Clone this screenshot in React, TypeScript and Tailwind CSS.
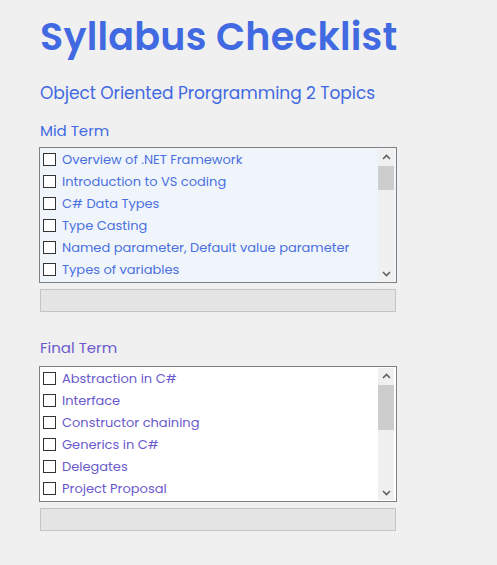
import React from "react";

const mid = [
  "Overview of .NET Framework",
  "Introduction to VS coding",
  "C# Data Types",
  "Type Casting",
  "Named parameter, Default value parameter",
  "Types of variables",
];
const fin = [
  "Abstraction in C#",
  "Interface",
  "Constructor chaining",
  "Generics in C#",
  "Delegates",
  "Project Proposal",
];

function Scrollbar({ thumbTop, thumbH }: { thumbTop: string; thumbH: string }) {
  return (
    <div className="w-[16px] my-[1px] mr-[2px] bg-[#f0f0f0] flex flex-col items-center">
      <svg width="9" height="6" viewBox="0 0 9 6" className="mt-[5px]">
        <path d="M1 5 L4.5 1.5 L8 5" fill="none" stroke="#606060" strokeWidth="1.6" />
      </svg>
      <div className={`w-full bg-[#cdcdcd] ${thumbTop} ${thumbH}`} />
      <div className="flex-1" />
      <svg width="9" height="6" viewBox="0 0 9 6" className="mb-[4px]">
        <path d="M1 1 L4.5 4.5 L8 1" fill="none" stroke="#606060" strokeWidth="1.6" />
      </svg>
    </div>
  );
}

function ListBox({
  items,
  bg,
  color,
  thumbTop,
  thumbH,
}: {
  items: string[];
  bg: string;
  color: string;
  thumbTop: string;
  thumbH: string;
}) {
  return (
    <div className={`ml-[-1px] w-[358px] h-[136px] border border-[#808080] flex ${bg}`}>
      <div className="flex-1 flex flex-col pl-[3px]">
        {items.map((t) => (
          <div key={t} className="h-[22px] flex items-center gap-[6px]">
            <div className="w-[13px] h-[13px] border border-[#333333] bg-white shrink-0" />
            <span className={`text-[13px] leading-none ${color}`}>{t}</span>
          </div>
        ))}
      </div>
      <Scrollbar thumbTop={thumbTop} thumbH={thumbH} />
    </div>
  );
}

export default function App() {
  return (
    <div
      className="min-h-screen bg-[#f0f0f0] pl-[40px]"
      style={{ fontFamily: "Poppins, Inter, 'Noto Sans', sans-serif" }}
    >
      <h1 className="pt-[14px] text-[38px] leading-[46px] font-semibold text-[#4169e1] tracking-[0.25px]">
        Syllabus Checklist
      </h1>
      <div className="mt-[21px] text-[17px] leading-[24px] text-[#4169e1] tracking-[-0.05px]">
        Object Oriented Prorgramming 2 Topics
      </div>
      <div className="mt-[16px] text-[15px] leading-[20px] text-[#4169e1]">Mid Term</div>
      <div className="mt-[6px]">
        <ListBox items={mid} bg="bg-[#f0f5fc]" color="text-[#4a70e0]" thumbTop="mt-[6px]" thumbH="h-[24px]" />
      </div>
      <div className="mt-[6px] w-[356px] h-[23px] bg-[#e5e5e5] border border-[#c4c4c4]" />
      <div className="mt-[26px] text-[15px] leading-[20px] text-[#6a5acd]">Final Term</div>
      <div className="mt-[8px]">
        <ListBox items={fin} bg="bg-white" color="text-[#6a5acd]" thumbTop="mt-[6px]" thumbH="h-[45px]" />
      </div>
      <div className="mt-[6px] w-[356px] h-[23px] bg-[#e5e5e5] border border-[#c4c4c4]" />
    </div>
  );
}
